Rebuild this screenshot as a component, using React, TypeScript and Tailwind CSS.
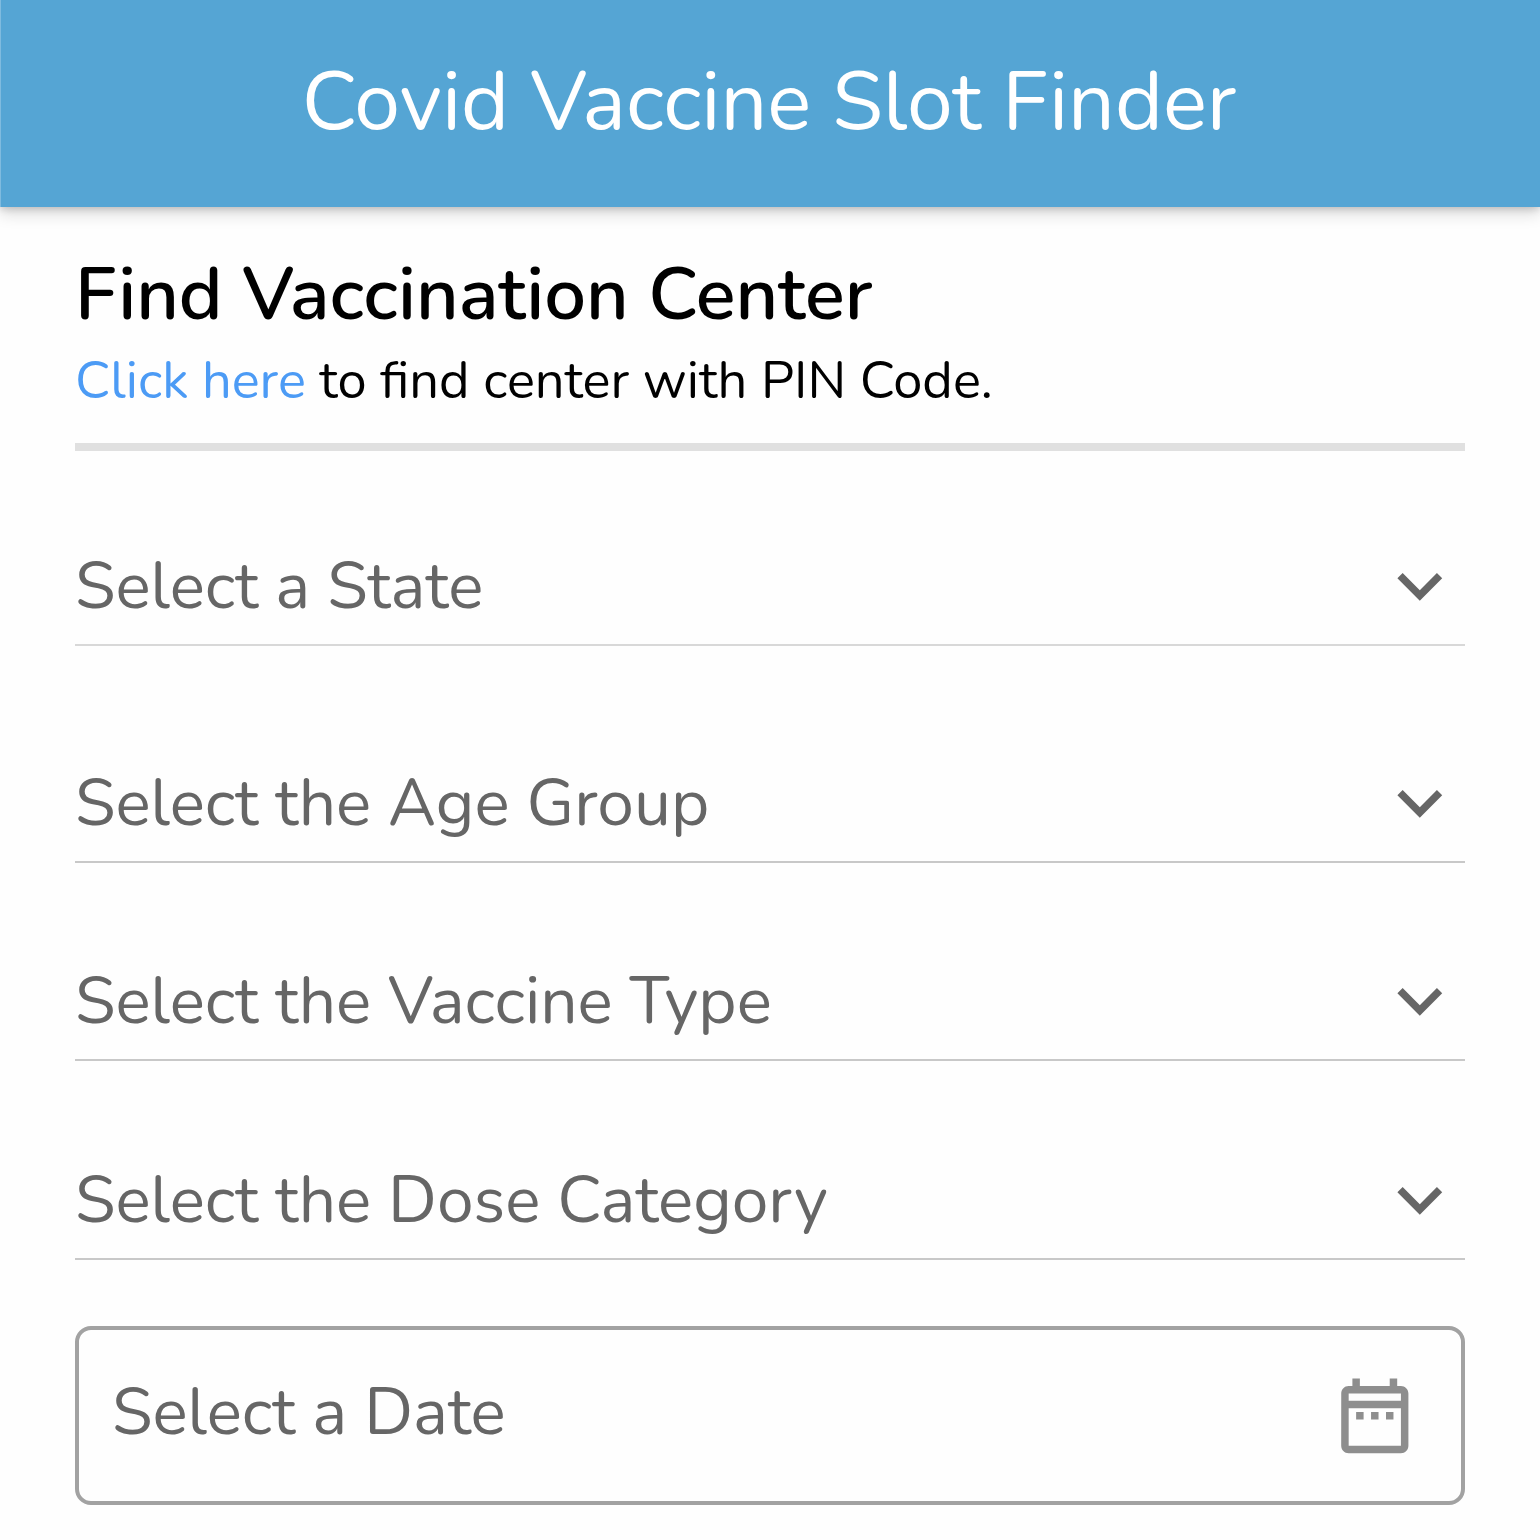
function Chevron() {
  return (
    <svg viewBox="0 0 24 24" className="size-[89.6px] fill-[#666]" aria-hidden="true">
      <path d="M7.41 8.59L12 13.17l4.59-4.58L18 10l-6 6-6-6 1.41-1.41z" />
    </svg>
  );
}

function Calendar() {
  return (
    <svg viewBox="0 0 24 24" className="size-[89.6px] fill-[#8e8e8e]" aria-hidden="true">
      <path d="M7 11h2v2H7v-2zm14-5v14c0 1.1-.9 2-2 2H5c-1.11 0-2-.9-2-2l.01-14c0-1.1.88-2 1.99-2h1V2h2v2h8V2h2v2h1c1.1 0 2 .9 2 2zM5 8h14V6H5v2zm14 12V10H5v10h14zm-4-7h2v-2h-2v2zm-4 0h2v-2h-2v2z" />
    </svg>
  );
}

function SelectRow({ label, className }: { label: string; className: string }) {
  return (
    <button
      type="button"
      className={`flex h-[120px] w-full items-center justify-between border-b-2 pt-px text-left text-[65.85px] leading-[90px] text-[#666] ${className}`}
    >
      <span className="whitespace-nowrap">{label}</span>
      <Chevron />
    </button>
  );
}

export default function App() {
  return (
    <div className="min-h-[1540px] w-[1540px] overflow-hidden bg-[#fefefe] font-['Nunito','Lato',sans-serif] text-black">
      <header className="flex h-[207px] items-center justify-center border-l border-[#7fbbdf] bg-[#55a5d4] pr-[3px] pb-[4px] shadow-[0_7px_15px_rgba(0,0,0,0.14),0_1px_8px_rgba(0,0,0,0.2)]">
        <h1 className="text-[82.35px] leading-[112px] text-white">Covid Vaccine Slot Finder</h1>
      </header>
      <main className="mx-[75px]">
        <h2 className="pt-[37px] text-[74.1px] leading-[101px] font-semibold">Find Vaccination Center</h2>
        <p className="text-[52.4px] leading-[72px]">
          <a href="#" className="text-[#4c9bf5]">Click here</a> to find center with PIN Code.
        </p>
        <hr className="mt-[26px] h-[8px] border-0 bg-[#e0e0e0]" />
        <SelectRow label="Select a State" className="mt-[75px] border-[#d8d8d8]" />
        <SelectRow label="Select the Age Group" className="mt-[97px] border-[#c8c8c8]" />
        <SelectRow label="Select the Vaccine Type" className="mt-[78px] border-[#c8c8c8]" />
        <SelectRow label="Select the Dose Category" className="mt-[79px] border-[#c8c8c8]" />
        <button
          type="button"
          className="mt-[66px] flex h-[179px] w-full items-center justify-between rounded-[16px] border-4 border-[#a2a2a2] pr-[41px] pl-[33px] text-left text-[65.85px] leading-[90px] text-[#666]"
        >
          <span className="pb-[7px]">Select a Date</span>
          <Calendar />
        </button>
      </main>
    </div>
  );
}
